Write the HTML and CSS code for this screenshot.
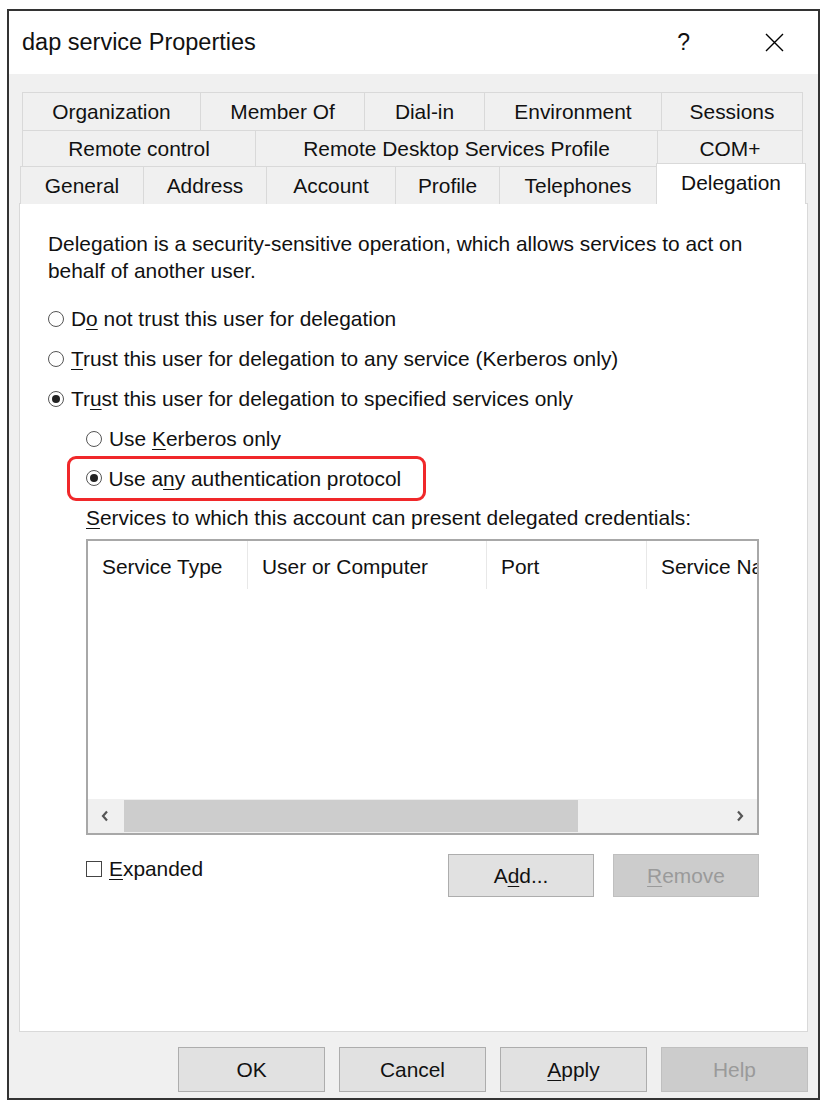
FILE: index.html
```html
<!DOCTYPE html>
<html lang="en">
<head>
    <meta charset="UTF-8">
    <title>dap service Properties</title>
    <link rel="stylesheet" href="styles.css">
</head>
<body>
    <div class="dialog">
        <div class="titlebar">
            <span class="title">dap service Properties</span>
            <span class="ctrl-help">?</span>
            <svg class="ctrl-close" width="19" height="19" viewBox="0 0 19 19">
                <path d="M1 1 L18 18 M18 1 L1 18" stroke="#000" stroke-width="1.4" fill="none"/>
            </svg>
        </div>

        <div class="body">
            <div class="tab-row row1">
                <div class="tab">Organization</div>
                <div class="tab">Member Of</div>
                <div class="tab">Dial-in</div>
                <div class="tab">Environment</div>
                <div class="tab">Sessions</div>
            </div>
            <div class="tab-row row2">
                <div class="tab">Remote control</div>
                <div class="tab">Remote Desktop Services Profile</div>
                <div class="tab">COM+</div>
            </div>
            <div class="tab-row row3">
                <div class="tab">General</div>
                <div class="tab">Address</div>
                <div class="tab">Account</div>
                <div class="tab">Profile</div>
                <div class="tab">Telephones</div>
                <div class="tab selected">Delegation</div>
            </div>

            <div class="panel">
                <p class="desc">Delegation is a security-sensitive operation, which allows services to act on behalf of another user.</p>

                <div class="option first">
                    <span class="radio"></span>
                    <span>D<u>o</u> not trust this user for delegation</span>
                </div>
                <div class="option">
                    <span class="radio"></span>
                    <span><u>T</u>rust this user for delegation to any service (Kerberos only)</span>
                </div>
                <div class="option">
                    <span class="radio checked"></span>
                    <span>Tr<u>u</u>st this user for delegation to specified services only</span>
                </div>

                <div class="sub">
                    <div class="option">
                        <span class="radio"></span>
                        <span>Use <u>K</u>erberos only</span>
                    </div>
                    <div class="option">
                        <div class="highlight">
                            <span class="radio checked"></span>
                            <span>Use a<u>n</u>y authentication protocol</span>
                        </div>
                    </div>
                    <div class="option">
                        <span><u>S</u>ervices to which this account can present delegated credentials:</span>
                    </div>

                    <div class="listbox">
                        <div class="list-head">
                            <div class="col c1">Service Type</div>
                            <div class="col c2">User or Computer</div>
                            <div class="col c3">Port</div>
                            <div class="col c4">Service Name</div>
                        </div>
                        <div class="list-body"></div>
                        <div class="hscroll">
                            <div class="arrow">
                                <svg width="8" height="12" viewBox="0 0 8 12"><path d="M6 1.5 L2 6 L6 10.5" stroke="#555" stroke-width="2.2" fill="none"/></svg>
                            </div>
                            <div class="track"><div class="thumb"></div></div>
                            <div class="arrow">
                                <svg width="8" height="12" viewBox="0 0 8 12"><path d="M2 1.5 L6 6 L2 10.5" stroke="#555" stroke-width="2.2" fill="none"/></svg>
                            </div>
                        </div>
                    </div>

                    <div class="list-actions">
                        <div class="check-row">
                            <span class="checkbox"></span>
                            <span><u>E</u>xpanded</span>
                        </div>
                        <div class="btn-group">
                            <div class="btn small">A<u>d</u>d...</div>
                            <div class="btn small disabled"><u>R</u>emove</div>
                        </div>
                    </div>
                </div>
            </div>

            <div class="footer">
                <div class="btn">OK</div>
                <div class="btn">Cancel</div>
                <div class="btn"><u>A</u>pply</div>
                <div class="btn disabled">Help</div>
            </div>
        </div>
    </div>
</body>
</html>
```

FILE: styles.css
```css
body {
    margin: 0;
    background: #fff;
    font-family: "Liberation Sans", Arial, sans-serif;
    font-size: 20.9px;
    color: #111;
}
u {
    text-underline-offset: 3px;
    text-decoration-thickness: 1px;
}
.dialog {
    margin: 9px 0 0 7px;
    width: 813px;
    height: 1091px;
    box-sizing: border-box;
    border: 2px solid #333;
    display: flex;
    flex-direction: column;
}
.titlebar {
    height: 63px;
    display: flex;
    align-items: center;
    padding: 0 34px 0 13px;
    background: #fff;
}
.title {
    font-size: 23.5px;
    flex: 1;
}
.ctrl-help {
    font-size: 23px;
    margin-right: 75px;
}
.body {
    flex: 1;
    background: #f0f0f0;
    padding: 18px 10px 0 10px;
}
.tab-row {
    display: grid;
}
.row1 {
    margin-left: 3px;
    width: 781px;
    grid-template-columns: 178px 164px 120px 177px 142px;
    height: 38px;
}
.row2 {
    margin-left: 3px;
    width: 781px;
    grid-template-columns: 233px 402px 146px;
    height: 36px;
}
.row3 {
    margin-left: 1px;
    width: 786px;
    grid-template-columns: 123px 123px 129px 104px 157px 150px;
    height: 37px;
}
.tab {
    display: flex;
    align-items: center;
    justify-content: center;
    border-top: 1px solid #d9d9d9;
    border-left: 1px solid #d9d9d9;
    box-sizing: border-box;
    background: #f0f0f0;
    white-space: nowrap;
}
.tab:last-child {
    border-right: 1px solid #d9d9d9;
}
.tab.selected {
    position: relative;
    z-index: 1;
    background: #fff;
    margin-top: -3px;
    height: 41px;
    padding-bottom: 3px;
}
.panel {
    height: 829px;
    box-sizing: border-box;
    background: #fff;
    border: 1px solid #d9d9d9;
    padding: 26px 0 0 28px;
}
.desc {
    margin: 0;
    width: 720px;
    line-height: 27px;
}
.option {
    display: flex;
    align-items: center;
    line-height: 27px;
    margin-top: 13px;
}
.option.first {
    margin-top: 21px;
}
.radio {
    width: 14px;
    height: 14px;
    border: 1px solid #555;
    border-radius: 50%;
    margin-right: 7px;
    display: flex;
    align-items: center;
    justify-content: center;
    flex-shrink: 0;
}
.radio.checked::after {
    content: "";
    width: 8px;
    height: 8px;
    border-radius: 50%;
    background: #222;
}
.sub {
    margin-left: 38px;
}
.highlight {
    display: flex;
    align-items: center;
    border: 3.5px solid #f0282a;
    border-radius: 9px;
    margin: -9.5px 0 -9.5px -19px;
    padding: 6px 22px 6px 15.5px;
}
.listbox {
    margin-top: 8px;
    width: 673px;
    height: 296px;
    box-sizing: border-box;
    border: 2px solid #a8a8a8;
    display: flex;
    flex-direction: column;
    overflow: hidden;
}
.list-head {
    display: flex;
    height: 48px;
    white-space: nowrap;
}
.col {
    box-sizing: border-box;
    padding: 4px 0 0 14px;
    display: flex;
    align-items: center;
    border-right: 1px solid #e8e8e8;
    flex-shrink: 0;
}
.c1 { width: 160px; }
.c2 { width: 239px; }
.c3 { width: 160px; }
.c4 { width: 200px; border-right: none; }
.list-body {
    flex: 1;
}
.hscroll {
    height: 34px;
    display: flex;
    background: #f0f0f0;
}
.arrow {
    width: 34px;
    display: flex;
    align-items: center;
    justify-content: center;
}
.track {
    flex: 1;
    padding: 1px 0 1px 2px;
}
.thumb {
    width: 454px;
    height: 100%;
    background: #cdcdcd;
}
.list-actions {
    display: flex;
    margin-top: 19px;
    width: 673px;
}
.check-row {
    align-self: flex-start;
    display: flex;
    align-items: center;
    line-height: 27px;
    margin-top: 1px;
}
.checkbox {
    width: 14px;
    height: 14px;
    border: 1px solid #444;
    margin-right: 7px;
}
.btn-group {
    margin-left: auto;
    display: flex;
    gap: 19px;
}
.btn {
    width: 147px;
    height: 45px;
    box-sizing: border-box;
    background: #e1e1e1;
    border: 1px solid #adadad;
    display: flex;
    align-items: center;
    justify-content: center;
}
.btn.small {
    width: 146px;
    height: 43px;
}
.btn.disabled {
    background: #cccccc;
    border-color: #bfbfbf;
    color: #9a9a9a;
}
.footer {
    display: flex;
    justify-content: flex-end;
    gap: 14px;
    margin-top: 15px;
}
```
